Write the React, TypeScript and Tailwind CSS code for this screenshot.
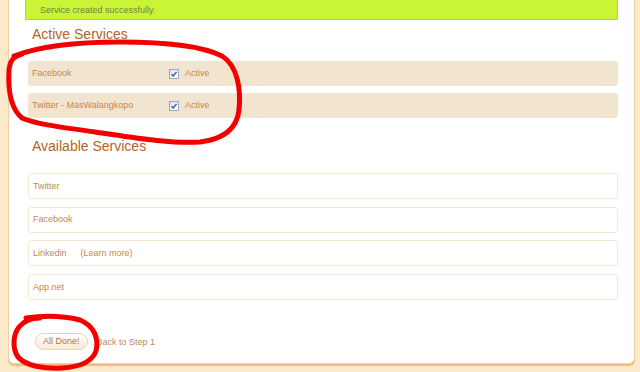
import React from "react";

const active = ["Facebook", "Twitter - MasWalangkopo"];
const available = ["Twitter", "Facebook", "Linkedin", "App.net"];

function Check() {
  return (
    <span className="flex h-[10px] w-[10px] items-center justify-center border border-[#9aa9c2] bg-gradient-to-br from-[#d9e1ee] to-white">
      <svg width="8" height="8" viewBox="0 0 8 8">
        <path d="M1.5 4.2 L3.2 6 L6.6 1.8" fill="none" stroke="#3048a8" strokeWidth="1.2" />
      </svg>
    </span>
  );
}

export default function App() {
  return (
    <div
      className="relative h-[372px] w-[640px] overflow-hidden bg-[#fde9cc] text-[9px] text-[#c4884f]"
      style={{ fontFamily: '"Liberation Sans", Arial, sans-serif' }}
    >
      <div className="ml-[8px] mr-[5px] h-[364px] rounded-b-[6px] border-x border-b border-[#f3cf9f] bg-white px-[16px] shadow-[0_2px_0_#f0bd7c]">
        <div className="flex h-[20px] items-center border border-t-0 border-[#b3d92b] bg-[#c9f536] pl-[14px] pt-[2px] text-[#74823a]">
          Service created successfully.
        </div>

        <h2 className="ml-[7px] mt-[6px] h-[16px] text-[14px] leading-[16px] text-[#b3632c]">
          Active Services
        </h2>
        <div className="ml-[3px] mt-[19px] flex flex-col gap-[7px]">
          {active.map((name) => (
            <div key={name} className="flex h-[25px] items-center rounded-[3px] bg-[#f2e5cf] pl-[4px] pt-[1px]">
              <span className="w-[137px]">{name}</span>
              <Check />
              <span className="ml-[6px]">Active</span>
            </div>
          ))}
        </div>

        <h2 className="ml-[7px] mt-[20px] h-[16px] text-[14px] leading-[16px] text-[#b3632c]">
          Available Services
        </h2>
        <div className="ml-[3px] mt-[19px] flex flex-col gap-[7.7px]">
          {available.map((name) => (
            <div key={name} className="flex h-[26px] items-center rounded-[3px] border border-[#f6e8d3] pl-[4px] pt-[1px]">
              <span>{name}</span>
              {name === "Linkedin" && <span className="ml-[14px]">(Learn more)</span>}
            </div>
          ))}
        </div>

        <div className="ml-[10px] mt-[33px] flex items-center">
          <button className="flex h-[17px] items-center rounded-full border border-[#ecd3b2] bg-gradient-to-b from-white to-[#f7ead8] px-[7px] pt-[1px] text-[#b0764a]">
            All Done!
          </button>
          <span className="ml-[9px] mt-[3px]">Back to Step 1</span>
        </div>
      </div>

      <svg className="pointer-events-none absolute left-0 top-0" width="640" height="372">
        <path
          d="M14 56 C40 46 80 42 120 42 C160 42 200 45 222 56 C238 66 241 90 239 110 C237 128 225 139 200 142 C170 144 130 137 95 132 C60 127 35 124 22 118 C10 108 8 88 9 70 C10 60 14 56 22 54"
          fill="none"
          stroke="#f20000"
          strokeWidth="5"
          strokeLinecap="round"
        />
        <path
          d="M26 318 C40 316 60 315 80 320 C95 326 99 340 96 351 C92 362 80 367 62 368 C44 369 26 366 18 357 C12 348 13 335 19 327 C24 321 32 318 40 318"
          fill="none"
          stroke="#f20000"
          strokeWidth="5"
          strokeLinecap="round"
        />
      </svg>
    </div>
  );
}
